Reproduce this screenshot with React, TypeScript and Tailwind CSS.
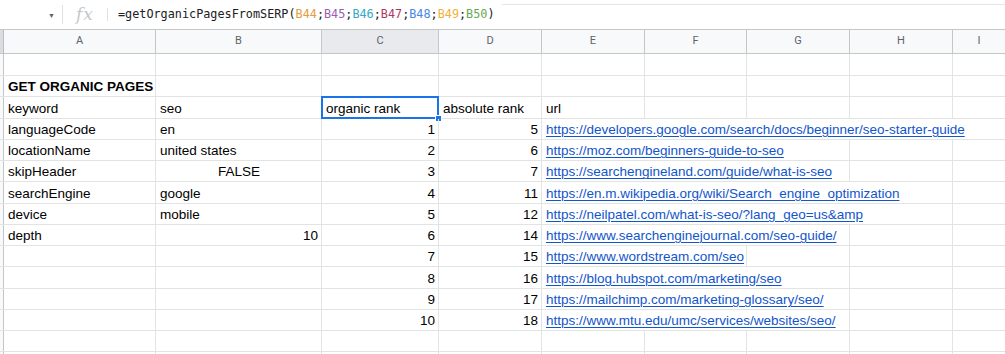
import type { ReactNode } from "react";

type Align = "left" | "center" | "right";

interface RowSpec {
  h: string;
  a?: ReactNode;
  b?: ReactNode;
  bAlign?: Align;
  c?: ReactNode;
  d?: ReactNode;
  e?: ReactNode;
  url?: string;
  span?: number;
  selectC?: boolean;
}

const ROW_H = "h-[21.25px]";

const rows: RowSpec[] = [
  { h: "h-[22px]" },
  { h: ROW_H, a: <span className="font-bold">GET ORGANIC PAGES</span> },
  { h: ROW_H, a: "keyword", b: "seo", c: "organic rank", d: "absolute rank", e: "url", selectC: true },
  { h: ROW_H, a: "languageCode", b: "en", c: "1", d: "5", url: "https://developers.google.com/search/docs/beginner/seo-starter-guide", span: 4 },
  { h: ROW_H, a: "locationName", b: "united states", c: "2", d: "6", url: "https://moz.com/beginners-guide-to-seo", span: 2 },
  { h: ROW_H, a: "skipHeader", b: "FALSE", bAlign: "center", c: "3", d: "7", url: "https://searchengineland.com/guide/what-is-seo", span: 2 },
  { h: ROW_H, a: "searchEngine", b: "google", c: "4", d: "11", url: "https://en.m.wikipedia.org/wiki/Search_engine_optimization", span: 3 },
  { h: ROW_H, a: "device", b: "mobile", c: "5", d: "12", url: "https://neilpatel.com/what-is-seo/?lang_geo=us&amp", span: 3 },
  { h: ROW_H, a: "depth", b: "10", bAlign: "right", c: "6", d: "14", url: "https://www.searchenginejournal.com/seo-guide/", span: 2 },
  { h: ROW_H, c: "7", d: "15", url: "https://www.wordstream.com/seo", span: 1 },
  { h: ROW_H, c: "8", d: "16", url: "https://blog.hubspot.com/marketing/seo", span: 2 },
  { h: ROW_H, c: "9", d: "17", url: "https://mailchimp.com/marketing-glossary/seo/", span: 2 },
  { h: ROW_H, c: "10", d: "18", url: "https://www.mtu.edu/umc/services/websites/seo/", span: 2 },
  { h: ROW_H },
  { h: ROW_H },
];

const SPAN_W = ["w-[103px]", "w-[205px]", "w-[308px]", "w-[411px]", "flex-1"];
const REST = ["w-[102px]", "w-[103px]", "w-[103px]", "flex-1"];

const HEADERS = [
  { label: "A", w: "w-[152px]" },
  { label: "B", w: "w-[166px]" },
  { label: "C", w: "w-[117px]", active: true },
  { label: "D", w: "w-[103px]" },
  { label: "E", w: "w-[103px]" },
  { label: "F", w: "w-[102px]" },
  { label: "G", w: "w-[103px]" },
  { label: "H", w: "w-[103px]" },
  { label: "I", w: "flex-1" },
];

function Cell({ w, align = "left", children, last }: { w: string; align?: Align; children?: ReactNode; last?: boolean }) {
  const justify = align === "right" ? "justify-end" : align === "center" ? "justify-center" : "justify-start";
  return (
    <div
      className={`${w} shrink-0 h-full flex items-end ${justify} pl-[4px] pr-[3px] pb-[2px] leading-[15px] whitespace-nowrap ${
        last ? "" : "border-r border-[#e2e3e3]"
      }`}
    >
      {children}
    </div>
  );
}

function Formula() {
  const refs: [string, string][] = [
    ["B44", "text-[#e39d3f]"],
    ["B45", "text-[#9a5fb4]"],
    ["B46", "text-[#34a9c4]"],
    ["B47", "text-[#b03a5f]"],
    ["B48", "text-[#4a86e8]"],
    ["B49", "text-[#f1b13a]"],
    ["B50", "text-[#6aa84f]"],
  ];
  return (
    <span className="font-['DejaVu_Sans_Mono',monospace] text-[11.8px] text-[#202124] whitespace-nowrap">
      =getOrganicPagesFromSERP(
      {refs.map(([r, c], i) => (
        <span key={r}>
          <span className={c}>{r}</span>
          {i < refs.length - 1 ? ";" : ""}
        </span>
      ))}
      )
    </span>
  );
}

export default function App() {
  return (
    <div className="w-[1005px] h-[354px] overflow-hidden bg-white font-['Liberation_Sans',Arial,sans-serif] text-[13.5px] text-black">
      {/* formula bar */}
      <div className="flex h-[29px] items-stretch">
        <div className="w-[62px] shrink-0 flex items-center justify-end pr-[7px]">
          <span className="text-[#5f6368] text-[7px] mt-[3px]">▼</span>
        </div>
        <div className="w-px my-[5px] bg-[#e0e0e0]" />
        <div className="w-[44px] shrink-0 flex items-center justify-center">
          <span className="font-['DejaVu_Serif',serif] italic text-[17px] text-[#c4c7ca] tracking-[1px]">fx</span>
        </div>
        <div className="w-px my-[8px] bg-[#e0e0e0]" />
        <div className="pl-[10px] pr-[7px] flex items-center">
          <Formula />
        </div>
        <div className="flex-1 mt-[4px] border-t border-[#e6e6e6]" />
      </div>

      {/* column headers */}
      <div className="flex h-[25px] border-y border-[#c4c7c5] bg-[#f8f9fa] font-['Roboto',sans-serif] text-[11px] text-[#5f6368]">
        <div className="w-[4px] shrink-0 bg-[#dadce0] border-r border-[#bdbdbd]" />
        {HEADERS.map((h, i) => (
          <div
            key={h.label}
            className={`${h.w} shrink-0 flex items-center justify-center ${
              i < HEADERS.length - 1 ? "border-r border-[#c4c7c5]" : ""
            } ${h.active ? "bg-[#e8eaed]" : ""}`}
          >
            {h.label}
          </div>
        ))}
      </div>

      {/* grid */}
      {rows.map((r, idx) => {
        const span = r.span ?? 0;
        return (
          <div key={idx} className={`flex ${r.h} border-b border-[#e2e3e3]`}>
            <div className="w-[4px] shrink-0 bg-[#f8f9fa] border-r border-[#c4c7c5]" />
            <Cell w="w-[152px]">{r.a}</Cell>
            <Cell w="w-[166px]" align={r.bAlign}>
              {r.b}
            </Cell>
            <div className="relative w-[117px] shrink-0 h-full">
              <Cell w="w-full" align={r.selectC ? "left" : "right"}>
                {r.c}
              </Cell>
              {r.selectC && (
                <>
                  <div className="absolute -top-[1px] -left-[1px] right-0 -bottom-[1px] border-2 border-[#1a73e8]" />
                  <div className="absolute -right-[3px] -bottom-[4px] w-[7px] h-[7px] bg-[#1a73e8] border border-white" />
                </>
              )}
            </div>
            <Cell w="w-[103px]" align={r.e !== undefined ? "left" : "right"}>
              {r.d}
            </Cell>
            {r.url ? (
              <>
                <Cell w={SPAN_W[span]} last={span === 4}>
                  <span className="text-[#1155cc] underline underline-offset-[2px] decoration-[1px]">{r.url}</span>
                </Cell>
                {REST.slice(span).map((w, i, arr) => (
                  <Cell key={i} w={w} last={i === arr.length - 1} />
                ))}
              </>
            ) : (
              <>
                <Cell w="w-[103px]">{r.e}</Cell>
                {REST.map((w, i) => (
                  <Cell key={i} w={w} last={i === REST.length - 1} />
                ))}
              </>
            )}
          </div>
        );
      })}
    </div>
  );
}
